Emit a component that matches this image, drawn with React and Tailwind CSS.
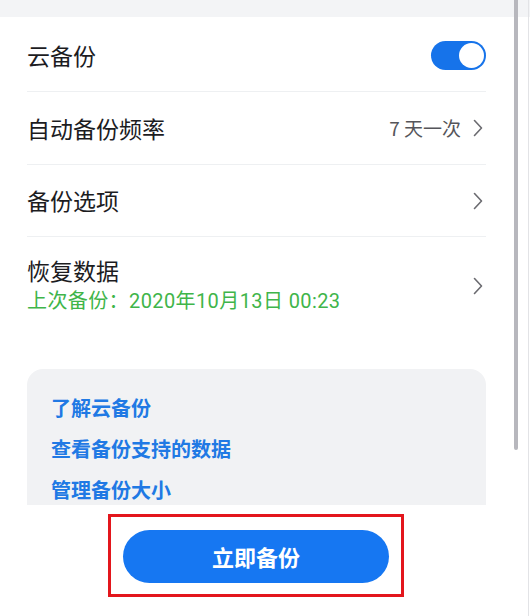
import React, { useState } from 'react'

const font = { fontFamily: '"Noto Sans CJK SC", "Noto Sans", sans-serif' }
const mixed = { fontFamily: 'Roboto, "Noto Sans CJK SC", sans-serif' }

function Chevron() {
  return (
    <svg width="10" height="18" viewBox="0 0 10 18" className="shrink-0">
      <polyline points="1.5,1.5 8.5,9 1.5,16.5" fill="none" stroke="#6b6b70" strokeWidth="1.6" strokeLinecap="round" strokeLinejoin="round" />
    </svg>
  )
}

function Toggle({ on, onChange }) {
  return (
    <button
      onClick={() => onChange(!on)}
      className={`relative w-[55px] h-[29px] rounded-full ${on ? 'bg-[#1673ea]' : 'bg-[#d0d3d9]'}`}
    >
      <span className={`absolute top-[2px] w-[25px] h-[25px] rounded-full bg-white ${on ? 'right-[2px]' : 'left-[2px]'}`} />
    </button>
  )
}

export default function App() {
  const [cloud, setCloud] = useState(true)

  const links = ['了解云备份', '查看备份支持的数据', '管理备份大小']

  return (
    <div className="relative w-[530px] h-[616px] overflow-hidden bg-white flex flex-col" style={font}>
      {/* top strip */}
      <div className="h-[17px] bg-[#f3f4f6] shrink-0" />

      {/* settings list */}
      <div className="px-[27px] w-[513px] shrink-0">
        <div className="h-[75px] flex items-center justify-between border-b border-[#eef0f2] pt-[3px]">
          <span className="text-[23px] text-[#1c1c1f]">云备份</span>
          <Toggle on={cloud} onChange={setCloud} />
        </div>
        <div className="h-[73px] flex items-center justify-between border-b border-[#eef0f2]">
          <span className="text-[23px] text-[#1c1c1f]">自动备份频率</span>
          <div className="flex items-center gap-[12px] pr-[3px]">
            <span className="text-[19px] text-[#55555a]">7 天一次</span>
            <Chevron />
          </div>
        </div>
        <div className="h-[72px] flex items-center justify-between border-b border-[#eef0f2]">
          <span className="text-[23px] text-[#1c1c1f]">备份选项</span>
          <div className="pr-[3px]">
            <Chevron />
          </div>
        </div>
        <div className="h-[98px] flex items-center justify-between">
          <div className="flex flex-col gap-[2px] -mt-[2px]">
            <span className="text-[23px] leading-[30px] text-[#1c1c1f]">恢复数据</span>
            <span className="text-[20px] leading-[28px] tracking-[0.4px] text-[#3fb54a]" style={mixed}>
              上次备份：2020年10月13日 00:23
            </span>
          </div>
          <div className="pr-[3px]">
            <Chevron />
          </div>
        </div>
      </div>

      {/* help card */}
      <div className="flex-1 pt-[34px] px-[27px] w-[513px] overflow-hidden">
        <div className="h-full rounded-t-[16px] bg-[#f1f2f4] pl-[24px] pt-[25px] flex flex-col gap-[13px]">
          {links.map((l) => (
            <a key={l} className="text-[20px] leading-[28px] font-bold text-[#2079e4] cursor-pointer">
              {l}
            </a>
          ))}
        </div>
      </div>

      {/* footer */}
      <div className="h-[111px] shrink-0 bg-white flex justify-center pt-[9px]">
        <div className="ml-[-18px] w-[296px] h-[83px] border-[3px] border-[#e3161c] px-[12px] pt-[13px]">
          <button className="w-[266px] h-[53px] rounded-full bg-[#1677f2] text-white text-[22px] font-bold">
            立即备份
          </button>
        </div>
      </div>

      {/* scrollbar */}
      <div className="absolute right-[12px] top-0 w-[4px] h-[450px] rounded-b bg-[#b7b7bd]" />
      <div className="absolute right-[1px] top-0 w-[1px] h-full bg-[#e2e3e6]" />
    </div>
  )
}
